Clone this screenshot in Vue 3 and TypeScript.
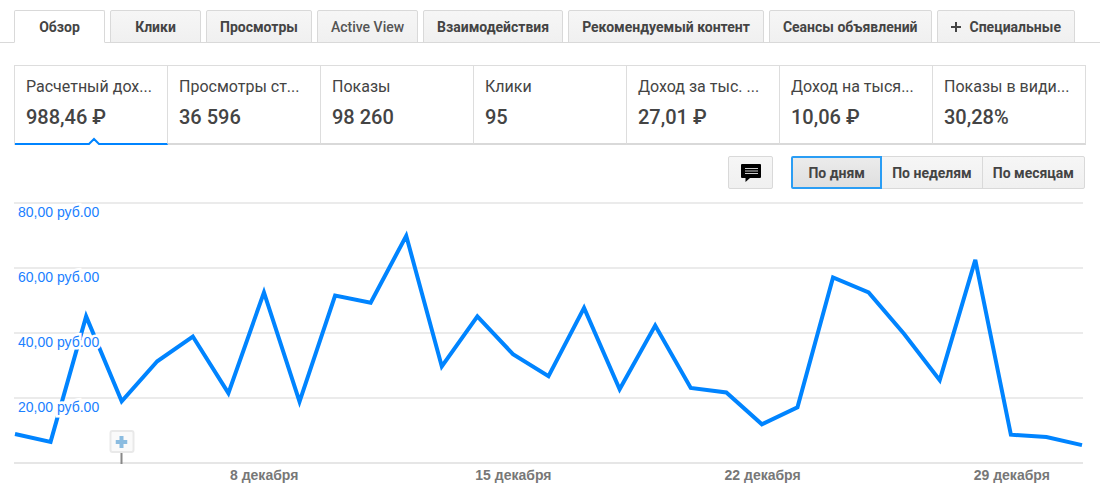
<script setup lang="ts">
import { ref, computed } from 'vue'

interface Tab { label: string; light?: boolean; plus?: boolean }
interface Metric { title: string; value: string }

const tabs: Tab[] = [
  { label: 'Обзор' },
  { label: 'Клики' },
  { label: 'Просмотры' },
  { label: 'Active View', light: true },
  { label: 'Взаимодействия' },
  { label: 'Рекомендуемый контент' },
  { label: 'Сеансы объявлений' },
  { label: 'Специальные', plus: true },
]
const activeTab = ref(0)

const metrics: Metric[] = [
  { title: 'Расчетный дох...', value: '988,46 ₽' },
  { title: 'Просмотры ст...', value: '36 596' },
  { title: 'Показы', value: '98 260' },
  { title: 'Клики', value: '95' },
  { title: 'Доход за тыс. ...', value: '27,01 ₽' },
  { title: 'Доход на тыся...', value: '10,06 ₽' },
  { title: 'Показы в види...', value: '30,28%' },
]
const activeMetric = ref(0)

const periods = ['По дням', 'По неделям', 'По месяцам']
const activePeriod = ref(0)

const levels = ['80,00 руб.00', '60,00 руб.00', '40,00 руб.00', '20,00 руб.00']

// Daily revenue for December, in roubles
const revenue = [
  8.6, 6.2, 44.8, 18.7, 31, 38.6, 21.2, 52.2, 18.6, 51.2, 49, 69.6, 29.4, 44.8, 33.2, 26.4,
  47.4, 22.4, 42, 22.8, 21.4, 11.6, 16.8, 56.8, 52.2, 39.4, 25.2, 62.2, 8.4, 7.7, 5.2,
]
const maxRevenue = 80
const lastIndex = revenue.length - 1

const linePoints = computed(() =>
  revenue.map((v, i) => `${(i / lastIndex) * 1000},${(1 - v / maxRevenue) * 1000}`).join(' '),
)

const dayLeft = (day: number) => ({ left: `${((day - 1) / lastIndex) * 100}%` })
const dateMarks = [8, 15, 22, 29]
</script>

<template>
  <main class="report">
    <div class="tabs" role="tablist">
      <button
        v-for="(tab, i) in tabs"
        :key="tab.label"
        type="button"
        role="tab"
        class="tab"
        :class="{ active: i === activeTab, light: tab.light }"
        :aria-selected="i === activeTab"
        @click="activeTab = i"
      >
        <svg v-if="tab.plus" class="plus" viewBox="0 0 10 10" aria-hidden="true">
          <path d="M5 0V10M0 5H10" />
        </svg>
        {{ tab.label }}
      </button>
    </div>

    <div class="metrics">
      <button
        v-for="(m, i) in metrics"
        :key="m.title"
        type="button"
        class="metric"
        :class="{ active: i === activeMetric }"
        :aria-pressed="i === activeMetric"
        @click="activeMetric = i"
      >
        <span class="title">{{ m.title }}</span>
        <span class="value">{{ m.value }}</span>
        <svg v-if="i === activeMetric" class="notch" viewBox="0 0 14 8" aria-hidden="true">
          <path class="fill" d="M1 8L7 2L13 8Z" />
          <path class="edge" d="M0 7H2L7 2L12 7H14" />
        </svg>
      </button>
    </div>

    <div class="toolbar">
      <button type="button" class="control notes" aria-label="Заметки">
        <svg viewBox="0 0 20 18" aria-hidden="true">
          <path d="M1 0H19Q20 0 20 1V13Q20 14 19 14H9L4.500 18V14H1Q0 14 0 13V1Q0 0 1 0Z" fill="#000" />
          <path d="M4 4.500H17M4 7H17M4 9.500H17" stroke="#ccc" stroke-width="1" />
        </svg>
      </button>
      <div class="periods" role="group">
        <button
          v-for="(p, i) in periods"
          :key="p"
          type="button"
          class="control period"
          :class="{ active: i === activePeriod }"
          :aria-pressed="i === activePeriod"
          @click="activePeriod = i"
        >
          {{ p }}
        </button>
      </div>
    </div>

    <section class="chart">
      <div v-for="level in levels" :key="level" class="band">
        <span class="level">{{ level }}</span>
      </div>
      <div class="plot">
        <svg class="series" viewBox="0 0 1000 1000" preserveAspectRatio="none" aria-hidden="true">
          <polyline :points="linePoints" />
        </svg>
      </div>
      <div class="overlay">
        <div class="annotation" :style="dayLeft(4)">
          <button type="button" class="add" aria-label="Добавить заметку">
            <svg viewBox="0 0 12 12" aria-hidden="true">
              <path d="M4 0H8V4H12V8H8V12H4V8H0V4H4Z" />
            </svg>
          </button>
          <span class="stem"></span>
        </div>
      </div>
    </section>
    <div class="dates">
      <span v-for="day in dateMarks" :key="day" class="date" :style="dayLeft(day)">{{ day }} декабря</span>
    </div>
  </main>
</template>

<style>
body {
  margin: 0;
  background: #fff;
}
</style>

<style scoped>
.report {
  font-family: Roboto, 'Liberation Sans', sans-serif;
  color: #444;
  padding-top: 10px;
}

button {
  font-family: inherit;
  color: inherit;
  margin: 0;
  box-sizing: border-box;
  cursor: pointer;
}

.tabs {
  display: flex;
  gap: 5px;
  padding: 0 14px;
  border-bottom: 1px solid #d9d9d9;
}

.tab {
  display: flex;
  align-items: center;
  justify-content: center;
  min-width: 91px;
  height: 33px;
  padding: 0 13px;
  margin-bottom: -1px;
  border: 1px solid #d9d9d9;
  border-radius: 2px 2px 0 0;
  background: linear-gradient(#f6f6f6, #f0f0f0);
  font-size: 14px;
  font-weight: 700;
  line-height: 16px;
  white-space: nowrap;
}

.tab.light {
  font-weight: 500;
  color: #555;
}

.tab.active {
  background: #fff;
  border-bottom-color: #fff;
}

.plus {
  width: 10px;
  height: 10px;
  margin-right: 9px;
  fill: none;
  stroke: #444;
  stroke-width: 2;
}

.metrics {
  display: grid;
  grid-template-columns: repeat(7, minmax(0, 1fr));
  margin: 22px 14px 0;
  border-left: 1px solid #ddd;
}

.metric {
  position: relative;
  display: flex;
  flex-direction: column;
  height: 80px;
  padding: 11px 0 0 11px;
  border: 1px solid #ddd;
  border-left: 0;
  border-bottom: 2px solid #d9d9d9;
  background: #fff;
  text-align: left;
  white-space: nowrap;
}

.metric.active {
  border-bottom-color: #0084ff;
}

.title {
  font-size: 16px;
  line-height: 20px;
}

.value {
  margin-top: 8px;
  font-size: 20px;
  font-weight: 500;
  line-height: 24px;
}

.notch {
  position: absolute;
  left: 50%;
  bottom: -2px;
  width: 14px;
  height: 8px;
  margin-left: -4px;
}

.notch .fill {
  fill: #fff;
}

.notch .edge {
  fill: none;
  stroke: #0084ff;
  stroke-width: 2;
}

.toolbar {
  display: flex;
  justify-content: flex-end;
  gap: 18px;
  padding: 11px 15px 0;
}

.control {
  height: 33px;
  border: 1px solid #d9d9d9;
  background: linear-gradient(#f6f6f6, #f0f0f0);
  font-size: 14px;
  font-weight: 700;
}

.notes {
  display: flex;
  align-items: center;
  justify-content: center;
  width: 45px;
  padding: 0;
  border-radius: 2px;
}

.notes svg {
  width: 20px;
  height: 18px;
}

.periods {
  display: flex;
}

.period {
  min-width: 91px;
  padding: 0 10px;
  margin-left: -1px;
  white-space: nowrap;
}

.period:first-child {
  margin-left: 0;
  border-radius: 2px 0 0 2px;
}

.period:last-child {
  border-radius: 0 2px 2px 0;
}

.period.active {
  position: relative;
  border: 2px solid #2a9df4;
  background: linear-gradient(#ebebeb, #dfdfdf);
}

.chart {
  position: relative;
  margin: 13px 17px 0 14px;
  border-bottom: 2px solid #e6e6e6;
}

.band {
  height: 65px;
  box-sizing: border-box;
  border-top: 2px solid #ebebeb;
  padding: 0 4px;
  line-height: 16px;
}

.level {
  position: relative;
  z-index: 2;
  display: inline-block;
  font-family: 'Liberation Sans', Arial, sans-serif;
  font-size: 14px;
  line-height: 16px;
  color: #1a80ff;
  -webkit-text-stroke: 5px #fff;
  paint-order: stroke fill;
}

.plot,
.overlay {
  position: absolute;
  inset: 0 1px 0 1px;
}

.plot {
  z-index: 1;
}

.overlay {
  z-index: 3;
  pointer-events: none;
}

.series {
  display: block;
  width: 100%;
  height: 100%;
  overflow: visible;
}

.series polyline {
  fill: none;
  stroke: #0084ff;
  stroke-width: 4;
  vector-effect: non-scaling-stroke;
}

.annotation {
  position: absolute;
  bottom: -2px;
  display: flex;
  flex-direction: column;
  align-items: center;
  transform: translateX(-50%);
  pointer-events: auto;
}

.add {
  display: flex;
  align-items: center;
  justify-content: center;
  width: 25px;
  height: 23px;
  padding: 0;
  border: 2px solid #e9e9e9;
  border-radius: 3px;
  background: #fafafa;
}

.add svg {
  width: 12px;
  height: 12px;
  fill: #8bbce0;
}

.stem {
  width: 2px;
  height: 11px;
  background: #888;
}

.dates {
  position: relative;
  height: 24px;
  margin: 3px 17px 0 15px;
}

.date {
  position: absolute;
  top: 0;
  transform: translateX(-50%);
  font-family: 'Liberation Sans', Arial, sans-serif;
  font-size: 14px;
  font-weight: 700;
  line-height: 16px;
  color: #777;
  white-space: nowrap;
}
</style>
